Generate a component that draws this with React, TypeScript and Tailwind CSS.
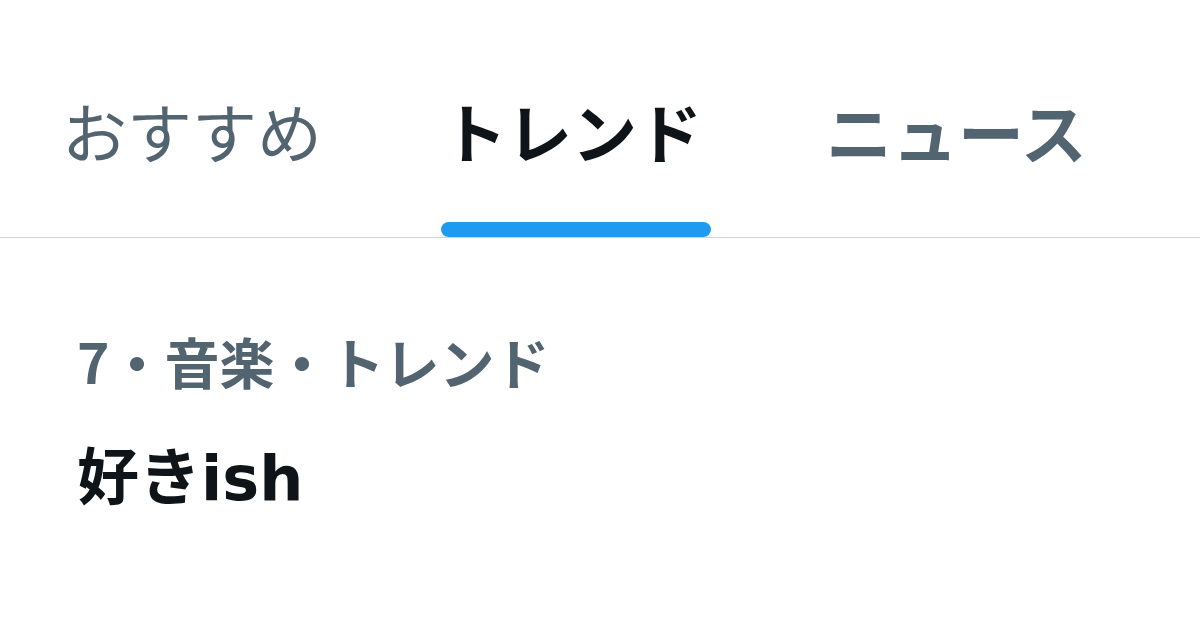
const jp = { fontFamily: '"Noto Sans CJK JP", "Noto Sans", sans-serif' };

export default function App() {
  return (
    <main className="w-[1200px] h-[643px] bg-white overflow-hidden" style={jp}>
      {/* tab bar */}
      <nav className="flex pl-[62px] pt-[90px] border-b-[1.5px] border-[#cfd3d7]">
        <div className="flex flex-col w-[260px] mr-[120px]">
          <span className="text-[65px] leading-[80px] font-normal text-[#536471]">おすすめ</span>
          <div className="mt-[52px] h-[15px]" />
        </div>
        <div className="flex flex-col w-[270px] mr-[114px]">
          <span className="text-[65px] leading-[80px] font-bold text-[#0f1419]">トレンド</span>
          <div className="mt-[52px] h-[15px] w-[270px] -ml-px rounded-full bg-[#1d9bf0]" />
        </div>
        <div className="flex flex-col w-[264px]">
          <span className="text-[66px] leading-[80px] font-bold text-[#536471]">ニュース</span>
          <div className="mt-[52px] h-[15px]" />
        </div>
      </nav>

      {/* trend item */}
      <section className="pl-[77px] pt-[90px]">
        <div className="text-[55px] leading-[64px] font-bold text-[#536471]">
          7・音楽・トレンド
        </div>
        <div
          className="mt-[51px] text-[62px] leading-[72px] font-bold text-[#0f1419]"
          style={{ fontFamily: '"DejaVu Sans", "Noto Sans CJK JP", sans-serif' }}
        >
          好きish
        </div>
      </section>
    </main>
  );
}
